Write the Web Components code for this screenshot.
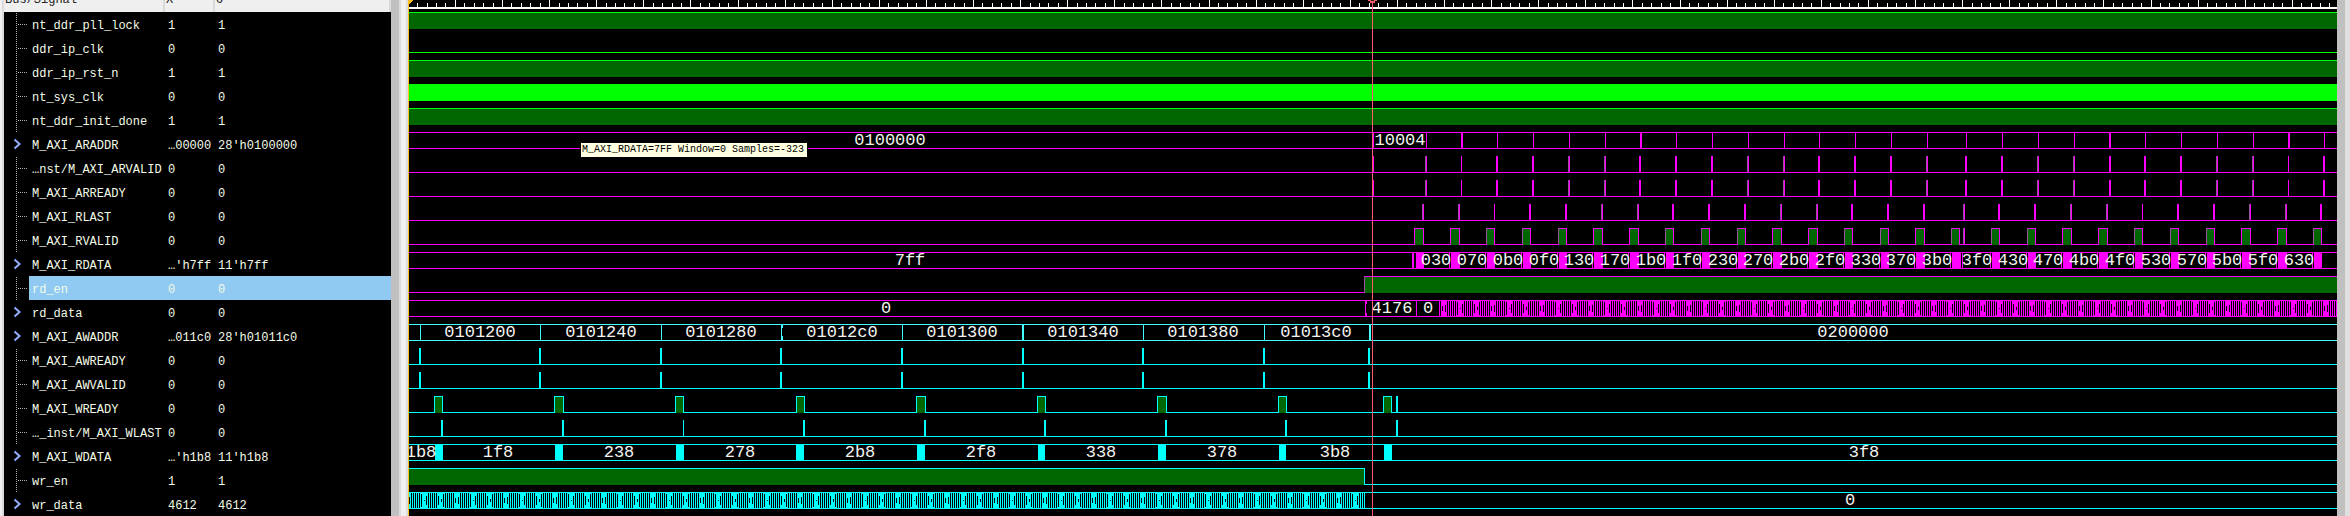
<!DOCTYPE html>
<html lang="en">
<head>
<meta charset="utf-8">
<title>Waveform viewer</title>
<style>
  html, body { margin: 0; background: #000; }
  body { font-family: "Liberation Mono", monospace; font-size: 12px; color: #f4fbe8; overflow: hidden; }
</style>
</head>
<body>
<logic-analyzer></logic-analyzer>

<script>
/* name, value at X, value at O, is a bus */
const SIGNALS = [
  ['nt_ddr_pll_lock', '1', '1'],
  ['ddr_ip_clk', '0', '0'],
  ['ddr_ip_rst_n', '1', '1'],
  ['nt_sys_clk', '0', '0'],
  ['nt_ddr_init_done', '1', '1'],
  ['M_AXI_ARADDR', '…00000', "28'h0100000", true],
  ['…nst/M_AXI_ARVALID', '0', '0'],
  ['M_AXI_ARREADY', '0', '0'],
  ['M_AXI_RLAST', '0', '0'],
  ['M_AXI_RVALID', '0', '0'],
  ['M_AXI_RDATA', "…'h7ff", "11'h7ff", true],
  ['rd_en', '0', '0'],
  ['rd_data', '0', '0', true],
  ['M_AXI_AWADDR', '…011c0', "28'h01011c0", true],
  ['M_AXI_AWREADY', '0', '0'],
  ['M_AXI_AWVALID', '0', '0'],
  ['M_AXI_WREADY', '0', '0'],
  ['…_inst/M_AXI_WLAST', '0', '0'],
  ['M_AXI_WDATA', "…'h1b8", "11'h1b8", true],
  ['wr_en', '1', '1'],
  ['wr_data', '4612', '4612', true]
];
const SELECTED = 11;

/* Time axis: START is the time shown at the left edge, one unit per pixel. */
const START = 409, FAR = 9000;
const GREEN = '#00ff00', MAG = '#ff00ff', CYAN = '#00ffff', PALE = '#44ffff', FILL = '#006600', DIM = '#a050a0';

const rect = (x, y, w, h, c) => `<rect x="${x - START}" y="${y}" width="${w}" height="${h}" fill="${c}"/>`;
const text = (x, s) => `<text x="${x - START}" y="13">${s}</text>`;
const low = (c, from = START, to = FAR) => rect(from, 16, to - from, 1, c);
const high = (c, from = START, to = FAR) => rect(from, 0, to - from, 17, FILL) + rect(from, 0, to - from, 1, c);
const bus = c => rect(START, 0, FAR, 1, c) + rect(START, 16, FAR, 1, c);
const bars = (list, c) => list.map(([x, w]) => rect(x, 0, w, 17, c)).join('');
const pulses = (list, c, dim = []) => low(c) + list.map(([x, w = 2]) =>
  rect(x, 0, w, 16, c) + (dim.includes(x) ? rect(x, 0, 1, 16, DIM) : '')).join('');
const boxes = (list, c, dim) => low(c) + list.map(([x, w]) =>
  rect(x, 0, w, 17, c) + rect(x + 1, 1, w - 2, 16, FILL) + (dim && w === 9 ? rect(x, 0, 1, 16, DIM) : '')).join('');

/* Bus that changes on nearly every sample: bars of beating height on a solid ground. */
function dense(from, to, phase, c, id) {
  const tile = [];
  const full = o => { for (let k = 0; k < 5; k++) tile.push([o + 2 * k, 15]); };
  full(0); full(17); full(32);
  tile.push([10, 9], [13, 3], [15, 13], [27, 5], [30, 7], [42, 13], [45, 1], [47, 9]);
  const body = tile.map(([x, h]) => `<rect x="${x}" y="${(17 - h) / 2}" width="1" height="${h}"/>`).join('');
  return `<defs><pattern id="${id}" patternUnits="userSpaceOnUse" x="${phase - START}" y="0" width="49" height="17">
    <rect width="49" height="17" fill="${c}"/>${body}</pattern></defs>` + rect(from, 0, to - from, 17, `url(#${id})`);
}

const AR = [[1373, 1], [1425], [1461, 1], [1496], [1532], [1568], [1604], [1639], [1675], [1711], [1747], [1783], [1818],
  [1854], [1890], [1926], [1965], [2001], [2037], [2073], [2109], [2144], [2180], [2216], [2252], [2288, 1], [2323]];
const AR_DIM = [1425, 1568, 1604, 1747, 1783, 1926, 2037, 2073, 2216, 2252];
const ARADDR = [[1373, 1], [1426, 1], [1461, 2], [1497, 1], [1533, 1], [1569, 1], [1605, 1], [1640, 2], [1676, 1], [1712, 1],
  [1748, 1], [1784, 1], [1819, 1], [1855, 1], [1891, 1], [1927, 1], [1966, 1], [2002, 1], [2038, 1], [2074, 1], [2109, 2],
  [2145, 1], [2181, 1], [2217, 1], [2253, 1], [2288, 2], [2324, 1]];
const RLAST = [[1422], [1458], [1494, 1], [1529], [1565], [1601], [1637], [1672], [1708], [1744], [1780], [1816], [1851],
  [1887], [1923], [1963], [1998], [2034], [2070], [2106], [2142, 1], [2177], [2213], [2249], [2285], [2320]];
const RLAST_DIM = [1422, 1458, 1601, 1637, 1780, 1816, 1963, 2070, 2106, 2249, 2285];
const RVALID = [[1414, 10], [1450, 10], [1486, 9], [1522, 9], [1558, 9], [1593, 10], [1629, 10], [1665, 9], [1701, 9],
  [1737, 9], [1772, 10], [1808, 10], [1844, 9], [1880, 9], [1915, 10], [1951, 9], [1991, 9], [2027, 9], [2062, 10],
  [2098, 10], [2134, 9], [2170, 9], [2206, 9], [2241, 10], [2277, 10], [2313, 9]];
const RDATA = ['030', '070', '0b0', '0f0', '130', '170', '1b0', '1f0', '230', '270', '2b0', '2f0', '330', '370', '3b0',
  '3f0', '430', '470', '4b0', '4f0', '530', '570', '5b0', '5f0', '630'];
const AW = [[419], [539], [660], [780], [901], [1022], [1142], [1263], [1368]];

const TRACES = [
  () => high(GREEN),
  () => low(GREEN),
  () => high(GREEN),
  () => rect(START, 0, FAR, 17, GREEN),
  () => high(GREEN),
  () => bus(MAG) + bars(ARADDR, MAG) + text(890, '0100000') + text(1400, '10004'),
  () => pulses(AR, MAG, AR_DIM),
  () => pulses(AR, MAG, AR_DIM),
  () => pulses(RLAST, MAG, RLAST_DIM),
  () => boxes(RVALID, MAG, true) + rect(1963, 0, 1, 16, DIM) + rect(1964, 0, 1, 16, MAG),
  () => bus(MAG) + bars([[1412, 2], [1416, 8], [1960, 1], [1962, 1]], MAG) +
    RVALID.slice(1).map(([x, w]) => rect(x - 1, 0, 1, 17, MAG) + rect(x + 1, 0, w - 1, 17, MAG)).join('') +
    text(910, '7ff') + RDATA.map((s, i) => text(RVALID[i + 1][0] - 14, s)).join(''),
  () => low(MAG, START, 1364) + high(MAG, 1364) + rect(1364, 0, 1, 17, DIM),
  () => bus(MAG) + bars([[1365, 1], [1416, 1]], MAG) + rect(1366, 0, 1, 4, MAG) + rect(1366, 13, 1, 4, MAG) +
    text(886, '0') + text(1392, '4176') + text(1428, '0') + dense(1439, FAR, 1611, MAG, 'busy-read'),
  () => bus(PALE) + bars([[420, 1], [540, 1], [661, 1], [781, 1], [902, 1], [1022, 2], [1143, 1], [1264, 1], [1369, 2]], PALE) +
    rect(782, 0, 1, 4, PALE) + rect(782, 12, 1, 4, PALE) +
    [[480, '0101200'], [601, '0101240'], [721, '0101280'], [842, '01012c0'], [962, '0101300'], [1083, '0101340'],
     [1203, '0101380'], [1316, '01013c0'], [1853, '0200000']].map(a => text(...a)).join(''),
  () => pulses(AW, CYAN),
  () => pulses(AW, CYAN),
  () => boxes([[434, 9], [554, 10], [675, 9], [796, 9], [916, 10], [1037, 9], [1157, 10], [1278, 9], [1383, 9]], CYAN) +
    rect(1396, 0, 2, 16, CYAN),
  () => pulses([[441], [562], [683, 1], [803], [924], [1044], [1165], [1285], [1396]], CYAN),
  () => bus(CYAN) + bars([[435, 8], [555, 8], [676, 8], [796, 8], [917, 8], [1038, 7], [1158, 8], [1279, 7], [1384, 8]], CYAN) +
    [[421, '1b8'], [498, '1f8'], [619, '238'], [740, '278'], [860, '2b8'], [981, '2f8'], [1101, '338'], [1222, '378'],
     [1335, '3b8'], [1864, '3f8']].map(a => text(...a)).join(''),
  () => high(CYAN, START, 1364) + rect(1364, 0, 1, 17, CYAN) + low(CYAN, 1364),
  () => bus(CYAN) + dense(START, 1365, 428, CYAN, 'busy-write') + text(1850, '0')
];

class SignalTable extends HTMLElement {
  connectedCallback() {
    const root = this.attachShadow({ mode: 'open' });
    const dots = `<svg width="24" height="24" aria-hidden="true" stroke="#b0b0b0" stroke-dasharray="1 1">
      <path d="M12.5 1V24M14 12.5H24" fill="none"/></svg>`;
    const chevron = `<svg width="24" height="24" aria-hidden="true"><path d="M10.5 7.5L15.5 12L10.5 16.5" fill="none" stroke="#8fb0ff" stroke-width="2"/></svg>`;
    root.innerHTML = `<style>
      :host { display: block; }
      table { width: 100%; table-layout: fixed; border-collapse: separate; border-spacing: 0; }
      .tree { width: 25px; } .name { width: 136px; } .x { width: 50px; }
      th, td { padding: 0; text-align: left; font-weight: normal; white-space: nowrap; }
      th { background: #efefef; color: #222; border-right: 2px solid #dadada; box-sizing: border-box; height: 12px; }
      th div { height: 12px; line-height: 0; padding-left: 1px; overflow: hidden; box-sizing: border-box; }
      td { height: 24px; vertical-align: top; }
      td span { display: block; height: 19px; line-height: 19px; padding: 5px 0 0 3px; }
      svg { display: block; }
      .selected td:not(:first-child) { background: #90caf2; }
    </style>
    <table>
      <colgroup><col class="tree"><col class="name"><col class="x"><col></colgroup>
      <thead><tr><th colspan="2"><div>Bus/Signal</div></th><th><div>X</div></th><th><div>O</div></th></tr></thead>
      <tbody>${SIGNALS.map(([n, x, o, isBus], i) => `<tr class="${i === SELECTED ? 'selected' : ''}">
        <td>${isBus ? chevron : dots}</td><td><span>${n}</span></td><td><span>${x}</span></td><td><span>${o}</span></td></tr>`).join('')}
      </tbody>
    </table>`;
  }
}

class WaveTrace extends HTMLElement {
  connectedCallback() {
    this.attachShadow({ mode: 'open' }).innerHTML = `<style>
      :host { display: block; height: 24px; }
      svg { display: block; width: 100%; height: 24px; }
      text { font-size: 17px; fill: #f4f4f0; text-anchor: middle; }
    </style><svg shape-rendering="crispEdges">${TRACES[+this.getAttribute('index')]()}</svg>`;
  }
}

class TimeRuler extends HTMLElement {
  connectedCallback() {
    let ticks = '';
    for (let k = 1; k < 800; k++) {
      const major = k % 5 === 0;
      ticks += `<rect x="${Math.floor(408.3 + 9.42 * k) - START}" y="${major ? 0 : 3}" width="1" height="${major ? 7 : 4}"/>`;
    }
    this.attachShadow({ mode: 'open' }).innerHTML = `<style>
      :host { display: block; height: 12px; }
      svg { display: block; width: 100%; height: 12px; }
    </style><svg fill="#fff" aria-hidden="true"><rect y="7" width="100%" height="2"/>${ticks}
      <path d="M0 0H4V1H3V2H2V3H1V4H0Z" fill="#ffc020"/></svg>`;
  }
}

class TimeCursor extends HTMLElement {
  connectedCallback() {
    this.style.setProperty('--at', (this.getAttribute('at') - START - 5) + 'px');
    this.attachShadow({ mode: 'open' }).innerHTML = `<style>
      :host { display: block; position: absolute; top: 0; bottom: 0; left: var(--at); width: 11px; }
      .line { height: 100%; width: 1px; margin: 0 auto; background: #ff5a6e; }
      svg { position: absolute; top: 0; left: 0; }
    </style><div class="line"></div>
    <svg width="11" height="4" aria-hidden="true"><path d="M1 0H10V1H8V3H3V1H1Z" fill="#ff5a6e"/><path d="M4 0H7V1H4Z" fill="#222"/></svg>`;
  }
}

class ValueTip extends HTMLElement {
  connectedCallback() {
    this.attachShadow({ mode: 'open' }).innerHTML = `<style>
      :host { display: block; position: absolute; left: 171px; top: 142px; border: 1px solid #000;
        background: #ffffe1; color: #000; font-size: 10px; line-height: 14px; padding: 0 3px 0 1px; white-space: nowrap; }
    </style><slot></slot>`;
  }
}

class WaveView extends HTMLElement {
  connectedCallback() {
    this.attachShadow({ mode: 'open' }).innerHTML = `<style>
      :host { display: block; position: relative; overflow: hidden; background: #000; border-left: 1px solid #ffc020; }
    </style><time-ruler></time-ruler>
    ${TRACES.map((_, i) => `<wave-trace index="${i}"></wave-trace>`).join('')}
    <time-cursor at="1372"></time-cursor><slot></slot>`;
  }
}

class LogicAnalyzer extends HTMLElement {
  connectedCallback() {
    this.attachShadow({ mode: 'open' }).innerHTML = `<style>
      :host { display: flex; background: #f0f0f0; }
      .frame { flex: none; width: 2px; background: #dadada; margin-left: 2px; }
      signal-table { flex: none; width: 387px; background: #000; }
      .scroll { flex: none; width: 8px; background: #c0c0c0; }
      .split { flex: none; width: 5px; background: #f0f0f0; border: solid #dcdcdc; border-width: 0 2px; }
      wave-view { flex: 1; min-width: 0; }
      .edge { flex: none; width: 5px; background: #e0e0e0; }
    </style>
    <div class="frame"></div>
    <signal-table></signal-table>
    <div class="scroll"></div>
    <div class="split"></div>
    <wave-view><value-tip>M_AXI_RDATA=7FF Window=0 Samples=-323</value-tip></wave-view>
    <div class="scroll"></div>
    <div class="edge"></div>`;
  }
}

customElements.define('signal-table', SignalTable);
customElements.define('wave-trace', WaveTrace);
customElements.define('time-ruler', TimeRuler);
customElements.define('time-cursor', TimeCursor);
customElements.define('value-tip', ValueTip);
customElements.define('wave-view', WaveView);
customElements.define('logic-analyzer', LogicAnalyzer);
</script>
</body>
</html>
